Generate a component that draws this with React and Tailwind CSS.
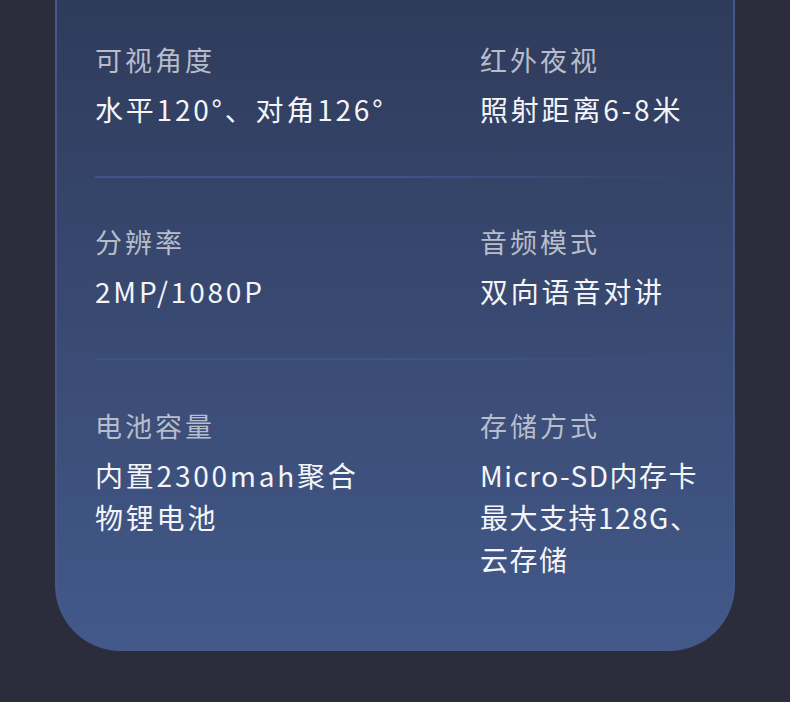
import React from "react";

const rows = [
  [
    { label: "可视角度", value: ["水平120°、对角126°"] },
    { label: "红外夜视", value: ["照射距离6-8米"] },
  ],
  [
    { label: "分辨率", value: ["2MP/1080P"] },
    { label: "音频模式", value: ["双向语音对讲"] },
  ],
  [
    { label: "电池容量", value: ["内置2300mah聚合", "物锂电池"] },
    { label: "存储方式", value: ["Micro-SD内存卡", "最大支持128G、", "云存储"], tight: true },
  ],
];

function Spec({ label, value, tight }) {
  return (
    <div className="whitespace-nowrap">
      <div className="text-[27px] leading-[40px] tracking-[3px] text-[#b7bdca]">{label}</div>
      <div
        className={
          "mt-[8px] text-[28px] leading-[42px] text-[#f4f5f8] " +
          (tight ? "tracking-[1.5px]" : "tracking-[2.8px]")
        }
      >
        {value.map((line, i) => (
          <div key={i}>{line}</div>
        ))}
      </div>
    </div>
  );
}

export default function App() {
  return (
    <div
      className="h-[702px] w-[790px] overflow-hidden bg-[#2b2d3d] px-[55px]"
      style={{ fontFamily: '"Noto Sans CJK SC", "Noto Sans", sans-serif' }}
    >
      <div className="h-[651px] rounded-b-[66px] border-x-2 border-b-2 border-[#44598a] bg-gradient-to-b from-[#2f3b5b] to-[#43598a] pl-[38px] pr-[38px]">
        {rows.map((pair, idx) => (
          <div key={idx}>
            {idx > 0 && (
              <div className="h-[2px] w-[600px] bg-gradient-to-r from-[#3e5389] via-[#3f548b] to-transparent" />
            )}
            <div
              className={
                "grid grid-cols-[385px_1fr] " +
                (idx === 0 ? "pt-[40px] pb-[46px]" : idx === 1 ? "pt-[44px] pb-[46px]" : "pt-[46px]")
              }
            >
              <Spec {...pair[0]} />
              <Spec {...pair[1]} />
            </div>
          </div>
        ))}
      </div>
    </div>
  );
}
